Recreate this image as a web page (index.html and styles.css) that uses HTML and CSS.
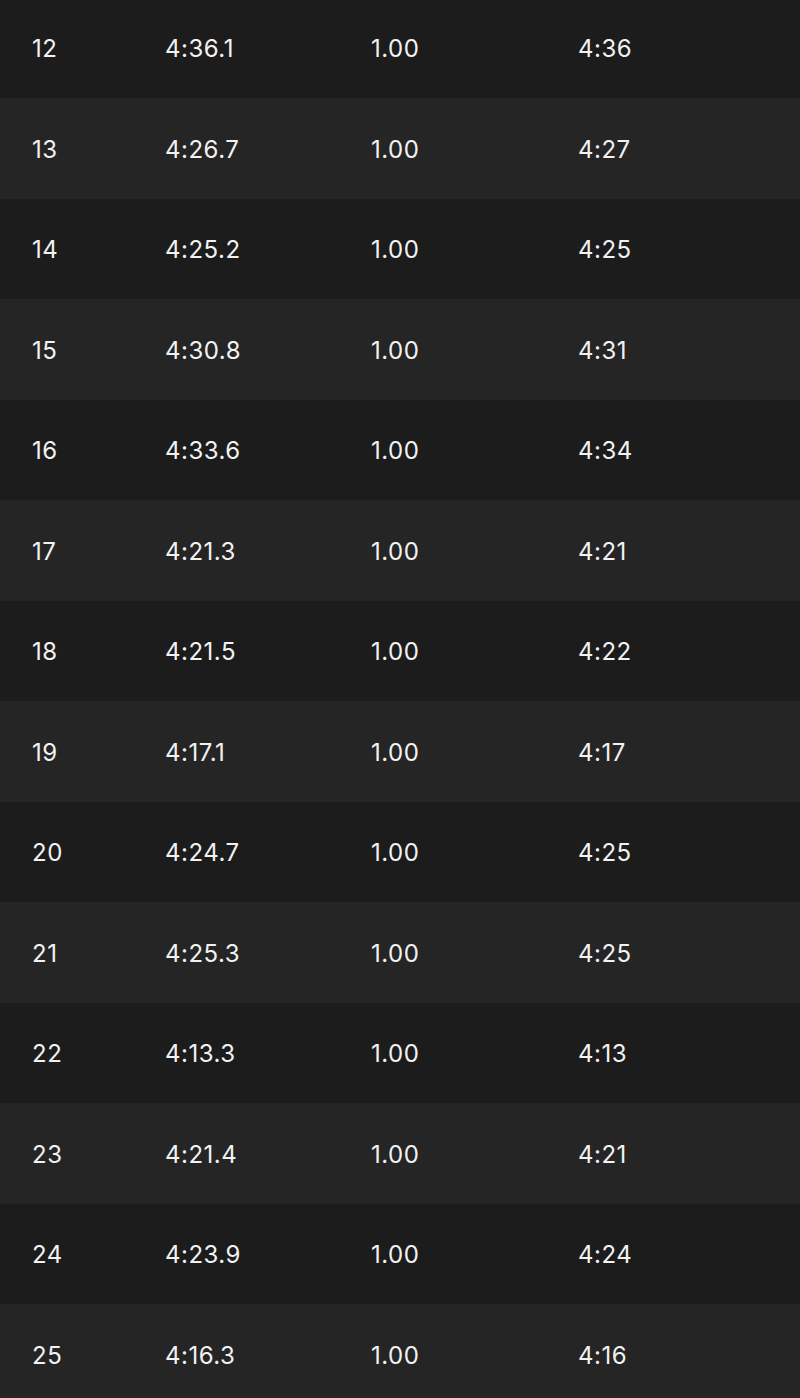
FILE: index.html
```html
<!DOCTYPE html>
<html lang="en">
<head>
<meta charset="utf-8">
<title>Splits</title>
<link rel="stylesheet" href="styles.css">
</head>
<body>
<div class="table">
  <div class="row"><span>12</span><span>4:36.1</span><span>1.00</span><span>4:36</span></div>
  <div class="row"><span>13</span><span>4:26.7</span><span>1.00</span><span>4:27</span></div>
  <div class="row"><span>14</span><span>4:25.2</span><span>1.00</span><span>4:25</span></div>
  <div class="row"><span>15</span><span>4:30.8</span><span>1.00</span><span>4:31</span></div>
  <div class="row"><span>16</span><span>4:33.6</span><span>1.00</span><span>4:34</span></div>
  <div class="row"><span>17</span><span>4:21.3</span><span>1.00</span><span>4:21</span></div>
  <div class="row"><span>18</span><span>4:21.5</span><span>1.00</span><span>4:22</span></div>
  <div class="row"><span>19</span><span>4:17.1</span><span>1.00</span><span>4:17</span></div>
  <div class="row"><span>20</span><span>4:24.7</span><span>1.00</span><span>4:25</span></div>
  <div class="row"><span>21</span><span>4:25.3</span><span>1.00</span><span>4:25</span></div>
  <div class="row"><span>22</span><span>4:13.3</span><span>1.00</span><span>4:13</span></div>
  <div class="row"><span>23</span><span>4:21.4</span><span>1.00</span><span>4:21</span></div>
  <div class="row"><span>24</span><span>4:23.9</span><span>1.00</span><span>4:24</span></div>
  <div class="row"><span>25</span><span>4:16.3</span><span>1.00</span><span>4:16</span></div>
</div>
</body>
</html>
```
FILE: styles.css
```css
html, body {
  margin: 0;
  padding: 0;
  background: #1c1c1c;
  overflow: hidden;
}
body {
  font-family: Inter, "Noto Sans", sans-serif;
  color: #f2f2f2;
}
.table {
  margin-top: -2.5px;
  display: flex;
  flex-direction: column;
}
.row {
  box-sizing: border-box;
  height: 100.5px;
  display: grid;
  grid-template-columns: 133px 206px 207px 1fr;
  align-items: center;
  padding-left: 32px;
  padding-top: 2px;
  font-size: 24px;
  letter-spacing: 0.5px;
  background: #1c1c1c;
}
.row:nth-child(even) {
  background: #252525;
}
```
